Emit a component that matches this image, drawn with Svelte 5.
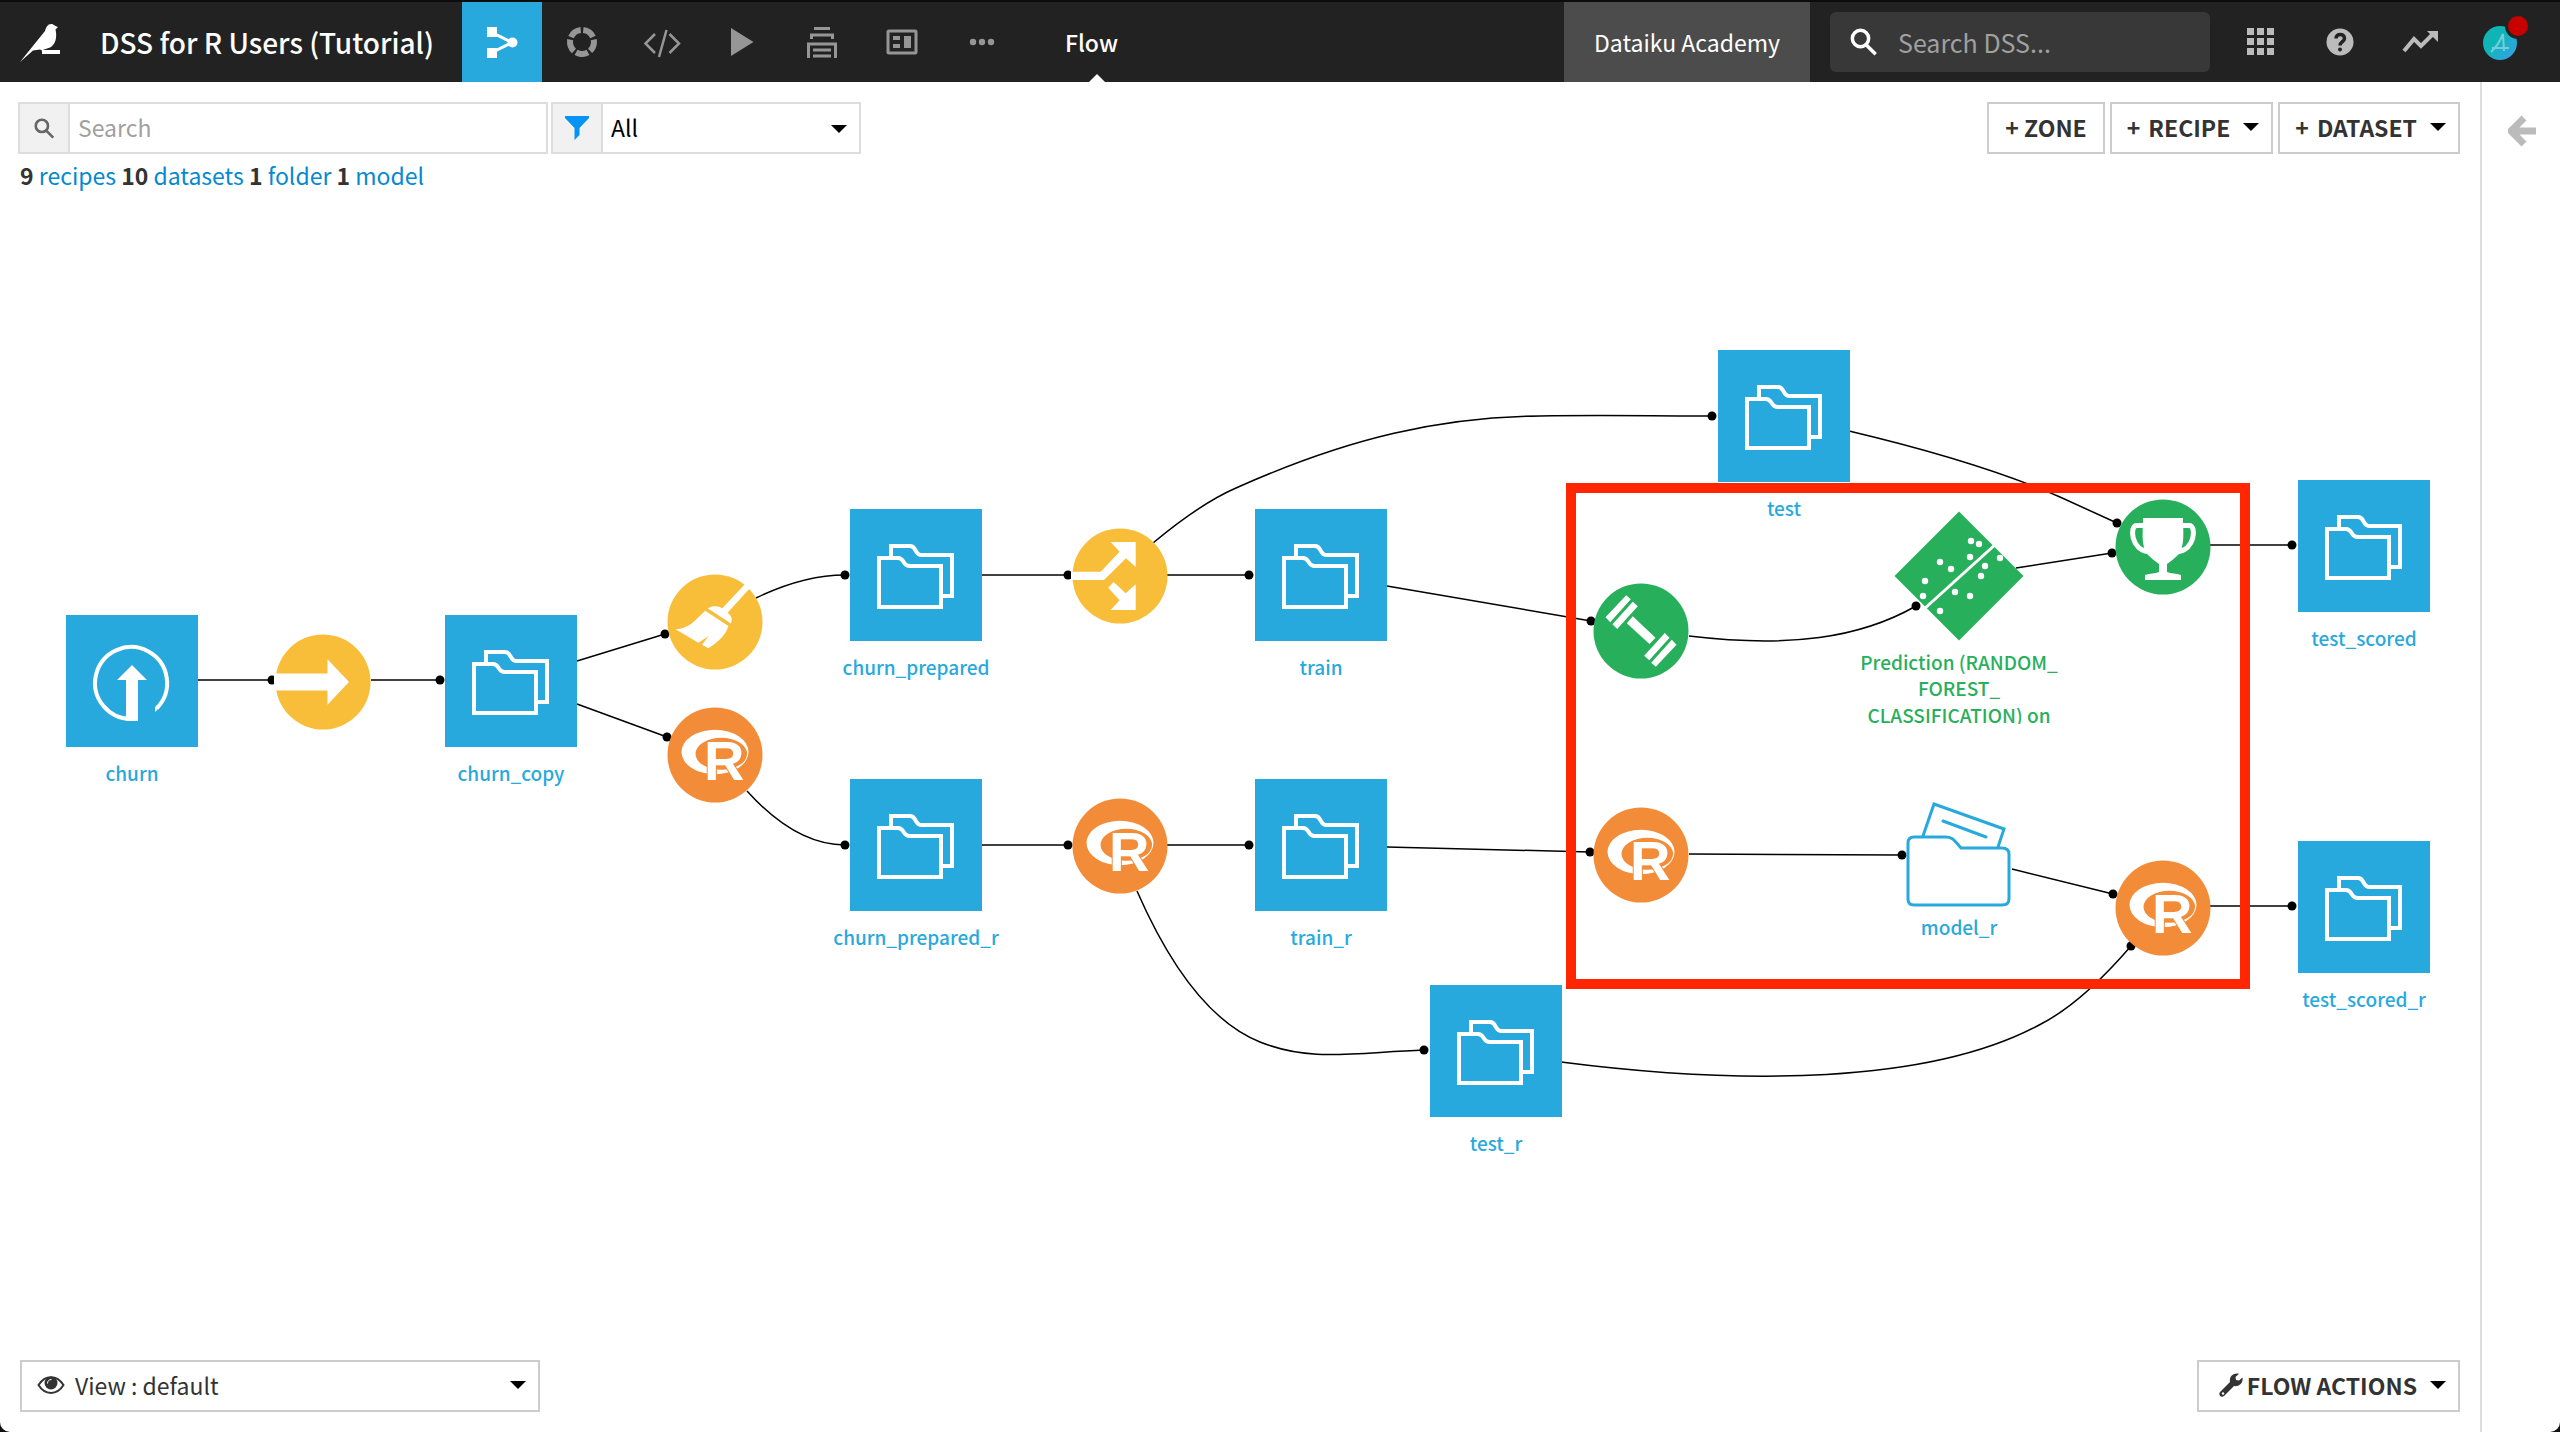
<script lang="ts">
  type Kind = 'dataset' | 'upload' | 'folder' | 'model' | 'sync' | 'prepare' | 'split' | 'r' | 'train' | 'score';
  type Node = { kind: Kind; x: number; y: number; label?: string };

  const nodes: Node[] = [
    { kind: 'upload', x: 132, y: 681, label: 'churn' },
    { kind: 'sync', x: 323, y: 682 },
    { kind: 'dataset', x: 511, y: 681, label: 'churn_copy' },
    { kind: 'prepare', x: 715, y: 622 },
    { kind: 'r', x: 715, y: 755 },
    { kind: 'dataset', x: 916, y: 575, label: 'churn_prepared' },
    { kind: 'dataset', x: 916, y: 845, label: 'churn_prepared_r' },
    { kind: 'split', x: 1120, y: 576 },
    { kind: 'r', x: 1120, y: 846 },
    { kind: 'dataset', x: 1321, y: 575, label: 'train' },
    { kind: 'dataset', x: 1321, y: 845, label: 'train_r' },
    { kind: 'dataset', x: 1496, y: 1051, label: 'test_r' },
    { kind: 'dataset', x: 1784, y: 416, label: 'test' },
    { kind: 'train', x: 1641, y: 631 },
    { kind: 'r', x: 1641, y: 855 },
    { kind: 'model', x: 1959, y: 576 },
    { kind: 'folder', x: 1959, y: 855 },
    { kind: 'score', x: 2163, y: 547 },
    { kind: 'r', x: 2163, y: 908 },
    { kind: 'dataset', x: 2364, y: 546, label: 'test_scored' },
    { kind: 'dataset', x: 2364, y: 907, label: 'test_scored_r' }
  ];

  // path plus the dot where it lands
  const edges: [string, number, number][] = [
    ['M198 680H272', 272, 680],
    ['M371 680H440', 440, 680],
    ['M577 661L665 634', 665, 634],
    ['M577 704L667 737', 667, 737],
    ['M756 598C785 584 815 575 845 575', 845, 575],
    ['M747 791C775 822 808 845 845 845', 845, 845],
    ['M982 575H1068', 1068, 575],
    ['M982 845H1068', 1068, 845],
    ['M1167 575H1249', 1249, 575],
    ['M1167 845H1249', 1249, 845],
    ['M1153 543C1177 523 1206 501 1236 488C1350 437 1442 417 1540 416C1600 415 1650 416 1712 416', 1712, 416],
    ['M1387 586L1591 621', 1591, 621],
    ['M1387 847L1590 852', 1590, 852],
    ['M1689 636C1790 648 1860 638 1916 606', 1916, 606],
    ['M2016 568L2112 553', 2112, 553],
    ['M1849 431C1925 449 2005 473 2060 497L2117 523', 2117, 523],
    ['M2210 545H2292', 2292, 545],
    ['M2210 906H2292', 2292, 906],
    ['M1689 854L1902 855', 1902, 855],
    ['M2012 869L2113 894', 2113, 894],
    ['M1137 891C1165 955 1205 1020 1260 1042C1310 1062 1350 1053 1424 1050', 1424, 1050],
    ['M1561 1062C1740 1085 1930 1085 2041 1024C2072 1008 2100 982 2131 946', 2131, 946]
  ];

  const points = [
    [12, -35], [20, -32], [11, -19], [-19, -14], [-8, -7], [-34, 5], [-36, 20],
    [41, -18], [26, -10], [22, 0], [-4, 16], [11, 20], [-19, 35]
  ];

  const counts = [
    [9, 'recipes'],
    [10, 'datasets'],
    [1, 'folder'],
    [1, 'model']
  ];

  const circles: Record<string, string> = {
    sync: '#f9be39',
    prepare: '#f9be39',
    split: '#f9be39',
    r: '#f28c38',
    train: '#28af5c',
    score: '#28af5c'
  };

  let search = $state('');
  let globalSearch = $state('');
  let filter = $state('All');
</script>

{#snippet magnifier()}
  <svg class="magnifier" viewBox="0 0 24 24" aria-hidden="true">
    <circle cx="9" cy="9" r="7" />
    <path d="M14 14.5L22 22.5" />
  </svg>
{/snippet}

{#snippet glyph(kind: Kind)}
  {#if kind === 'dataset'}
    <path class="line" d="M-37 -17H-18C-11 -17-14 -9-6 -9H25V32H-37ZM-25 -17V-29H-6C1 -29-2 -20 6 -20H36V21H25" />
  {:else if kind === 'upload'}
    <path class="line" d="M0 38A36 36 0 1 1 25 27" />
    <path class="white" d="M0 -16L15 -1H6V40H-6V-1H-15ZM23 26L27 23V27L23 31Z" />
  {:else if kind === 'sync'}
    <path class="white" d="M-49 -8.5H4.5V-22.7L26 0L4.5 22.7V8.5H-49Z" />
  {:else if kind === 'split'}
    <path class="white" d="M-49 -4.3H-19.3L-.4 -24.3L-9.3 -34H15.7V-9L6 -17.7L-16 4H-49Z" />
    <path class="white" d="M-6.4 6L5.7 17.3L15.7 8.3V34H-9.3L-.4 24.3L-11.8 11.7Z" />
  {:else if kind === 'prepare'}
    <path class="white" d="M31 -39L36 -35L12.5 -9.3C17 -6 17.500 -3 15.900 1.500L-7.300 -13.700C-2 -17 4 -16 7.300 -13.700Z" />
    <path class="white" d="M-9.800 -11.300L13.400 4C11 13 3 20-6.600 26.300L-13 22.700L-6.300 14L-16.600 20.700L-39.500 7.300C-26 7-20 -2-9.800 -11.300Z" />
  {:else if kind === 'r'}
    <path
      class="white"
      fill-rule="evenodd"
      d="M-33.500 -3A33.500 22.300 0 1 1 33.500 -3A33.500 22.300 0 1 1-33.500 -3ZM-19.500 -1.200A25.800 16 0 1 0 32.100 -1.200A25.800 16 0 1 0-19.500 -1.200Z"
    />
    <text class="r-letter" x="-11" y="25">R</text>
  {:else if kind === 'train'}
    {#each [0, 180] as turn}
      <path
        class="white"
        transform="rotate({turn})"
        d="M-14.800 -35.700L-10.200 -31.700L-30.800 -8.700L-35.500 -13.700ZM-8.200 -29.300L-3.200 -24.700L-23.800 -2L-28.500 -6.700Z"
      />
    {/each}
    <path class="white" d="M-8.200 -14.700L14.500 6.700L8.500 13L-14.200 -7.700Z" />
  {:else if kind === 'score'}
    <path
      class="white"
      d="M-20 -29H20V-24C21 -6 20 0 16 7C12 11 8 14 4 17V25C8 27 13 26 18 28V33H-18V28C-13 26-8 27-4 25V17C-8 14-12 11-16 7C-20 0-21 -6-20 -24Z"
    />
    <path class="handle" d="M-18 -21.500H-26C-34 -22-32 4-14 4.500M18 -21.500H26C34 -22 32 4 14 4.500" />
  {:else if kind === 'model'}
    <path fill="#28af5c" d="M0 -64.500L64.500 0L0 64.500L-64.500 0Z" />
    <path class="boundary" d="M38 -33L-36 34" />
    {#each points as [x, y]}
      <circle class="white" cx={x} cy={y} r="3.200" />
    {/each}
  {:else if kind === 'folder'}
    <path
      class="outline"
      d="M-51 -12Q-51 -18-45 -18H-14C-6 -18-5 -15 2 -7H43Q50 -7 50 -1V44Q50 50 43 50H-45Q-51 50-51 44ZM-36 -19L-25 -51L45 -26L39 -8"
    />
    <path class="outline" stroke-linecap="round" d="M-16 -34L27 -18" />
  {/if}
{/snippet}

<div class="page">
  <header>
    <a class="logo" href="/" aria-label="Home">
      <svg viewBox="20 22 42 42" aria-hidden="true">
        <path d="M20 63L45 32C46 28 48 25 51 25C54 25 54 27 58 28L55.500 30.500C57 37 56 43 53 46C50 50 46 49 42 51.500L40 50.500L33 51.500Z" />
        <path d="M42 51H60V55H42Z" />
      </svg>
    </a>
    <a class="project" href="/project">DSS for R Users (Tutorial)</a>

    <nav class="tools">
      <a class="active" href="/flow" aria-label="Flow">
        <svg viewBox="-20 -20 40 40">
          <path class="solid" d="M-15 -15H-5V-5H-15ZM-15 6H-5V16H-15Z" />
          <path class="stroke" d="M-7 -8L10 0.500L-7 9" />
          <circle class="solid" cx="10.500" cy="0.500" r="5" />
        </svg>
      </a>
      <a href="/lab" aria-label="Lab">
        <svg viewBox="-20 -20 40 40">
          <circle class="ring" r="12" pathLength="100" transform="rotate(-84)" />
        </svg>
      </a>
      <a href="/code" aria-label="Code">
        <svg viewBox="-20 -20 40 40">
          <path class="stroke thin" d="M-7 -8L-16.500 1.500L-7 11M7.500 -8L17 1.500L7.500 11M4.500 -12L-3 15" />
        </svg>
      </a>
      <a href="/run" aria-label="Run">
        <svg viewBox="-20 -20 40 40"><path class="solid" d="M-11 -14L11.500 0L-11 14Z" /></svg>
      </a>
      <a href="/jobs" aria-label="Jobs">
        <svg viewBox="-20 -20 40 40">
          <path class="stroke" d="M-8 -13.500H8M-10.500 -3V-7H10.500V-3M-13.500 16V2H13.500V16M-9 8H9M-9 14H9" />
        </svg>
      </a>
      <a href="/dashboards" aria-label="Dashboards">
        <svg viewBox="-20 -20 40 40">
          <rect class="stroke" x="-14" y="-11" width="28" height="22" rx="1" />
          <path class="solid" d="M-9 -6H-2V-2H-9ZM-9 2H-2V6H-9ZM2 -6H9V6H2Z" />
        </svg>
      </a>
      <a href="/more" aria-label="More">
        <svg viewBox="-20 -20 40 40">
          <circle class="solid" cx="-9" r="3.200" /><circle class="solid" r="3.200" /><circle class="solid" cx="9" r="3.200" />
        </svg>
      </a>
    </nav>
    <a class="current" href="/flow">Flow</a>

    <a class="academy" href="/academy">Dataiku Academy</a>
    <label class="global-search">
      {@render magnifier()}
      <input type="text" placeholder="Search DSS..." aria-label="Search DSS" bind:value={globalSearch} />
    </label>
    <nav class="account">
      <a href="/apps" aria-label="Applications">
        <svg viewBox="-20 -20 40 40">
          <path class="solid" d="M-13 -14h7v7h-7zM-3 -14h7v7h-7zM7 -14h7v7h-7zM-13 -4h7v7h-7zM-3 -4h7v7h-7zM7 -4h7v7h-7zM-13 6h7v7h-7zM-3 6h7v7h-7zM7 6h7v7h-7z" />
        </svg>
      </a>
      <a href="/help" aria-label="Help">
        <svg viewBox="-20 -20 40 40">
          <circle class="solid" r="13.500" />
          <path class="question" d="M-4 -3.500C-4 -9 4.500 -9 4.500 -3.500C4.500 -.5 0 0 0 3.500" />
          <circle cy="7.500" r="2" fill="#222" />
        </svg>
      </a>
      <a href="/activity" aria-label="Activity">
        <svg viewBox="-20 -20 40 40">
          <path class="stroke thick" d="M-16 9L-6 -3L1 4L13 -8" />
          <path class="solid" d="M7 -11H18V0Z" />
        </svg>
      </a>
      <a href="/profile" aria-label="Profile">
        <svg viewBox="-20 -20 40 40">
          <defs>
            <linearGradient id="avatar" x1="0" y1="0" x2="1" y2="1">
              <stop offset="0.4" stop-color="#0fb5b5" />
              <stop offset="1" stop-color="#3a9ff0" />
            </linearGradient>
          </defs>
          <circle cy="1" r="17" fill="url(#avatar)" />
          <path class="initial" d="M-9 10Q-2 4 3 -8L4 9M-8 6H9" />
          <circle cx="18" cy="-16" r="13" fill="#222" />
          <circle cx="18" cy="-16" r="10" fill="#c80000" />
        </svg>
      </a>
    </nav>
  </header>

  <div class="body">
    <main>
      <div class="toolbar">
        <label class="field search">
          <span class="addon">{@render magnifier()}</span>
          <input type="text" placeholder="Search" aria-label="Search the flow" bind:value={search} />
        </label>
        <label class="field filter caret">
          <span class="addon">
            <svg class="funnel" viewBox="0 0 24 24" aria-hidden="true"><path d="M0 0H24V2L14.500 12V19L9.500 24V12L0 2Z" /></svg>
          </span>
          <select aria-label="Filter" bind:value={filter}>
            <option>All</option>
          </select>
        </label>
        <div class="actions">
          <button type="button" class="zone">+ ZONE</button>
          <button type="button" class="drop"><span class="plus">+</span>RECIPE</button>
          <button type="button" class="drop"><span class="plus">+</span>DATASET</button>
        </div>
      </div>
      <p class="counts">
        {#each counts as [n, what]}
          <b>{n}</b> <a href="/{what}">{what}</a>{' '}
        {/each}
      </p>

      <svg class="canvas" viewBox="0 192 2480 1168" role="img" aria-label="Project flow">
        <defs>
          <clipPath id="label-clip"><rect x="1840" y="640" width="240" height="84" /></clipPath>
        </defs>
        {#each edges as [d, x, y]}
          <path class="edge" {d} />
          <circle cx={x} cy={y} r="4.500" />
        {/each}

        {#each nodes as node}
          <g transform="translate({node.x} {node.y})">
            {#if node.kind === 'dataset' || node.kind === 'upload'}
              <rect class="tile" x="-66" y="-66" width="132" height="132" />
            {:else if circles[node.kind]}
              <circle r="47.500" fill={circles[node.kind]} />
            {/if}
            {@render glyph(node.kind)}
            {#if node.label}
              <text class="label" y="100">{node.label}</text>
            {/if}
          </g>
        {/each}

        <text class="label" x="1959" y="935">model_r</text>
        <g clip-path="url(#label-clip)">
          <text class="label model" x="1959" y="670">Prediction (RANDOM_</text>
          <text class="label model" x="1959" y="696">FOREST_</text>
          <text class="label model" x="1959" y="723">CLASSIFICATION) on</text>
        </g>
        <rect class="highlight" x="1571" y="488" width="674" height="496" />
      </svg>

      <footer>
        <button type="button" class="view drop">
          <svg class="eye" viewBox="0 0 28 20" aria-hidden="true">
            <path d="M1.500 10C8 -.5 20 -.5 26.500 10C20 20.500 8 20.500 1.500 10Z" />
            <circle cx="14" cy="8" r="6.500" />
            <path class="glint" d="M10.500 8.500C10.500 6 12 4.500 14.500 4.500" />
          </svg>
          View : default
        </button>
        <button type="button" class="drop flow-actions">
          <svg class="wrench" viewBox="0 0 24 24" aria-hidden="true">
            <path d="M1 19L11 9C10 4 14 -.5 20 .8L16.500 4L17 7L20 7.500L23.500 4.500C24.500 10 19.500 14 15 13L5 23C2 25-1 22 1 19Z" />
            <circle cx="4" cy="20.500" r="1.200" fill="#fff" />
          </svg>
          FLOW ACTIONS
        </button>
      </footer>
    </main>

    <aside>
      <button type="button" aria-label="Open panel">
        <svg viewBox="0 0 30 32" aria-hidden="true"><path d="M16 3L3 16L16 29M4 16H28" /></svg>
      </button>
    </aside>
  </div>
</div>

<style>
  :global(body) {
    margin: 0;
    background: #111;
  }

  .page {
    display: flex;
    flex-direction: column;
    min-height: 100vh;
    background: #fff;
    border-radius: 0 0 10px 10px;
    overflow: hidden;
    color: #333;
    font-family: "Noto Sans CJK SC", "Open Sans", sans-serif;
    font-size: 23px;
    line-height: 32px;
  }

  a {
    color: inherit;
    text-decoration: none;
  }

  input,
  select,
  button {
    font: inherit;
    color: inherit;
    border: 0;
    background: none;
    padding: 0;
    margin: 0;
    outline: none;
  }

  /* top bar */
  header {
    display: flex;
    align-items: stretch;
    height: 80px;
    border-top: 2px solid #0c0c0c;
    background: #222;
    color: #fff;
  }

  header > a {
    display: flex;
    align-items: center;
  }

  .logo {
    padding-left: 20px;
  }

  .logo svg {
    width: 42px;
    height: 42px;
    fill: #fff;
  }

  .project {
    width: 362px;
    padding-left: 38px;
    font-size: 28px;
    font-weight: 500;
    white-space: nowrap;
  }

  .tools,
  .account {
    display: flex;
  }

  .tools a,
  .account a {
    display: flex;
    align-items: center;
    justify-content: center;
    width: 80px;
    color: #969696;
  }

  .tools a.active {
    background: #28a9dd;
    color: #fff;
  }

  .account a {
    color: #bbb;
  }

  .tools svg,
  .account svg {
    width: 40px;
    height: 40px;
    overflow: visible;
  }

  .solid {
    fill: currentColor;
  }

  .stroke {
    fill: none;
    stroke: currentColor;
    stroke-width: 3;
  }

  .thin {
    stroke-width: 2.500;
  }

  .thick {
    stroke-width: 4;
  }

  .ring {
    fill: none;
    stroke: currentColor;
    stroke-width: 6;
    stroke-dasharray: 16.600 3.400;
  }

  .question {
    fill: none;
    stroke: #222;
    stroke-width: 3.500;
  }

  .initial {
    fill: none;
    stroke: #6fd0d8;
    stroke-width: 2;
  }

  .current {
    position: relative;
    margin-left: 43px;
    font-weight: 500;
  }

  .current::after {
    content: "";
    position: absolute;
    left: 50%;
    bottom: 0;
    border: 8px solid transparent;
    border-top: 0;
    border-bottom-color: #fff;
    margin-left: -2px;
  }

  .academy {
    margin-left: auto;
    padding: 0 30px;
    background: #4c4c4c;
  }

  .global-search {
    display: flex;
    align-items: center;
    box-sizing: border-box;
    width: 380px;
    margin: 10px 10px 10px 20px;
    padding: 0 20px;
    gap: 20px;
    border-radius: 6px;
    background: #383838;
    font-size: 25px;
  }

  .global-search input {
    flex: 1;
    min-width: 0;
    color: #fff;
  }

  .account {
    margin-right: 20px;
  }

  .magnifier {
    width: 28px;
    height: 28px;
    flex: none;
    fill: none;
    stroke: currentColor;
    stroke-width: 3;
  }

  input::placeholder {
    color: #a0a0a0;
    opacity: 1;
  }

  /* workspace */
  .body {
    display: flex;
    flex: 1;
  }

  main {
    display: flex;
    flex-direction: column;
    flex: 1;
    min-width: 0;
  }

  .toolbar {
    display: flex;
    gap: 3px;
    padding: 20px 20px 0 18px;
  }

  .field {
    display: flex;
    box-sizing: border-box;
    height: 52px;
    border: 2px solid #ddd;
  }

  .addon {
    display: flex;
    align-items: center;
    justify-content: center;
    width: 48px;
    border-right: 2px solid #ddd;
    background: #f1f1f1;
    color: #666;
  }

  .addon .magnifier {
    width: 21px;
    height: 21px;
  }

  .funnel {
    width: 24px;
    height: 24px;
    fill: #0694f4;
  }

  .search {
    width: 530px;
  }

  .filter {
    width: 310px;
    color: #000;
  }

  .field input,
  .field select {
    flex: 1;
    min-width: 0;
    padding: 0 0 2px 8px;
    appearance: none;
  }

  .caret {
    position: relative;
  }

  .caret::after {
    content: "";
    position: absolute;
    right: 12px;
    top: 21px;
    border: 8px solid transparent;
    border-bottom: 0;
    border-top-color: #000;
    pointer-events: none;
  }

  .actions {
    display: flex;
    gap: 5px;
    margin-left: auto;
  }

  .actions button,
  footer button {
    display: flex;
    align-items: center;
    box-sizing: border-box;
    height: 52px;
    padding: 0 12px 2px 15px;
    border: 2px solid #ccc;
    font-weight: 700;
    white-space: nowrap;
  }

  .actions .zone {
    padding: 0 16px 2px;
  }

  .plus {
    margin-right: 8px;
  }

  .drop::after {
    content: "";
    border: 8px solid transparent;
    border-bottom: 0;
    border-top-color: #000;
    margin-left: 13px;
  }

  .counts {
    margin: 5px 0 1px 20px;
  }

  .counts a {
    color: #0589d1;
  }

  .canvas {
    flex: 1;
    display: block;
    width: 100%;
    min-height: 0;
  }

  .edge {
    fill: none;
    stroke: #000;
    stroke-width: 1.500;
  }

  .tile {
    fill: #28a9dd;
  }

  .white {
    fill: #fff;
  }

  .line {
    fill: none;
    stroke: #fff;
    stroke-width: 4;
  }

  .handle {
    fill: none;
    stroke: #fff;
    stroke-width: 5;
  }

  .boundary {
    stroke: #fff;
    stroke-width: 3;
  }

  .outline {
    fill: none;
    stroke: #28a9dd;
    stroke-width: 3;
  }

  .r-letter {
    fill: #fff;
    stroke: #f28c38;
    stroke-width: 2;
    paint-order: stroke;
    font: bold 56px "Liberation Sans", sans-serif;
  }

  .label {
    fill: #28a9dd;
    font-size: 19px;
    font-weight: 500;
    text-anchor: middle;
  }

  .label.model {
    fill: #28af5c;
  }

  .highlight {
    fill: none;
    stroke: #ff2600;
    stroke-width: 10;
  }

  footer {
    display: flex;
    justify-content: space-between;
    padding: 0 20px 20px;
  }

  footer .view {
    width: 520px;
    font-weight: 400;
  }

  .view.drop::after {
    margin-left: auto;
  }

  .eye {
    width: 28px;
    height: 20px;
    margin-right: 10px;
    fill: #333;
  }

  .eye path {
    fill: none;
    stroke: #333;
    stroke-width: 2;
  }

  .eye .glint {
    stroke: #fff;
    stroke-width: 1;
  }

  footer .flow-actions {
    padding-left: 20px;
  }

  .wrench {
    width: 24px;
    height: 24px;
    margin-right: 4px;
    fill: #333;
  }

  aside {
    box-sizing: border-box;
    width: 80px;
    padding: 33px 0 0 26px;
    border-left: 2px solid #ddd;
  }

  aside svg {
    display: block;
    width: 30px;
    height: 32px;
    fill: none;
    stroke: #bbb;
    stroke-width: 7;
  }
</style>
